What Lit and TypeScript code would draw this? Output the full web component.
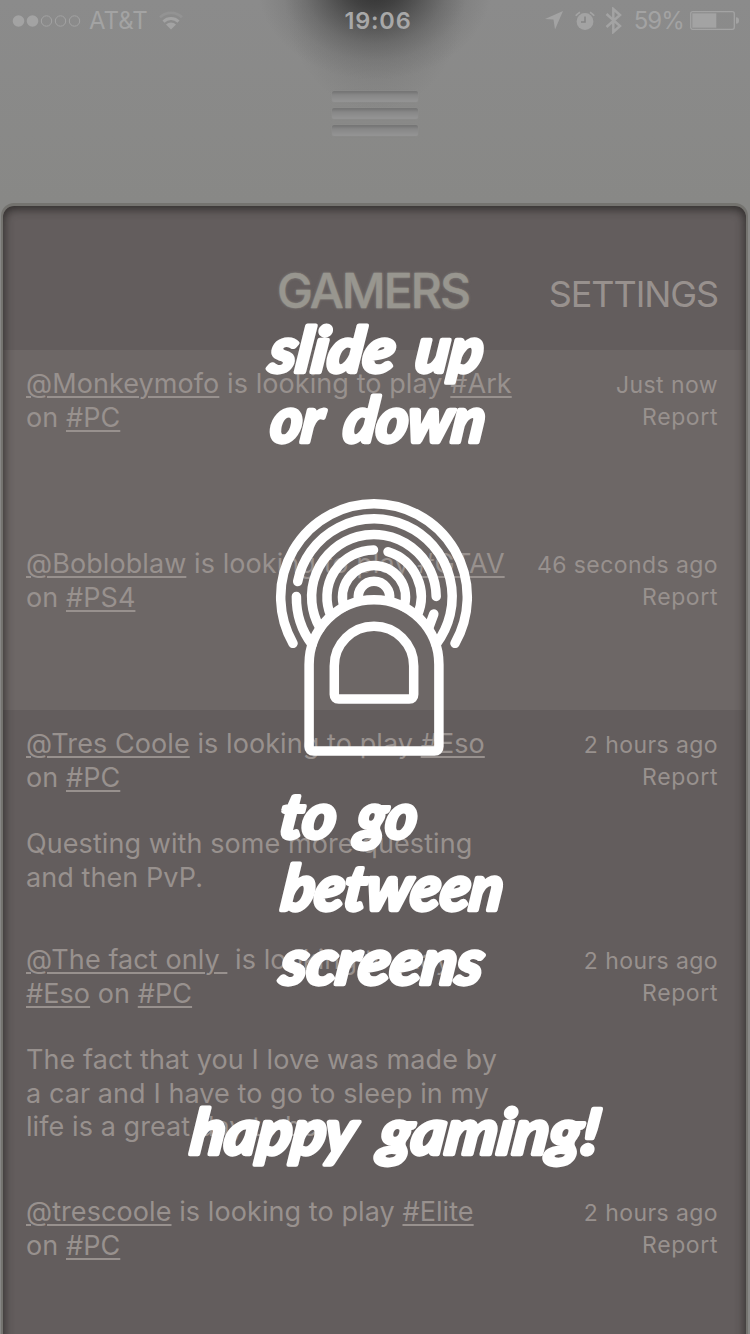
import { LitElement, html, css, svg, nothing } from "lit";
import { customElement, property } from "lit/decorators.js";

interface Post {
  user: string;
  gap: string;
  game: string;
  wrapGame?: boolean;
  platform: string;
  time: string;
  note?: string[];
  size: string;
}

const POSTS: Post[] = [
  { user: "@Monkeymofo", gap: " ", game: "#Ark", platform: "#PC", time: "Just now", size: "short lit" },
  { user: "@Bobloblaw", gap: " ", game: "#GTAV", platform: "#PS4", time: "46 seconds ago", size: "short lit" },
  { user: "@Tres Coole", gap: " ", game: "#Eso", platform: "#PC", time: "2 hours ago", note: ["Questing with some more questing", "and then PvP."], size: "medium" },
  { user: "@The fact only\u00a0", gap: "\u00a0", game: "#Eso", wrapGame: true, platform: "#PC", time: "2 hours ago", note: ["The fact that you I love was made by", "a car and I have to go to sleep in my", "life is a great day to be"], size: "tall" },
  { user: "@trescoole", gap: " ", game: "#Elite", platform: "#PC", time: "2 hours ago", size: "short" },
];

@customElement("status-bar")
class StatusBar extends LitElement {
  static styles = css`
    :host { display: flex; justify-content: space-between; height: 41px; padding: 0 11px 0 12px; color: #a3a3a3; font: 400 24px/41px Inter, sans-serif; position: relative; }
    svg { display: block; fill: none; stroke: none; }
    .left, .right { display: flex; align-items: center; }
    .carrier { margin-left: 8px; letter-spacing: 0; }
    .wifi { margin-left: 10px; }
    .clock { position: absolute; left: 0; right: 2px; text-align: center; font-weight: 600; font-size: 23.5px; letter-spacing: 0.8px; color: #a8a8a8; top: 0; padding-left: 8px; }
    .pct { margin: 0 6px 0 11px; letter-spacing: -0.9px; }
    .bt { margin-left: 10px; }
    .alarm { margin-left: 12px; }
  `;
  render() {
    return html`
      <div class="left">
        <svg width="69" height="14" viewBox="0 0 69 14">
          ${[6.5, 20.5].map((x) => svg`<circle cx=${x} cy="7" r="5.8" fill="#a3a3a3"/>`)}
          ${[34.5, 48.5, 62.5].map((x) => svg`<circle cx=${x} cy="7" r="5.2" stroke="#a3a3a3"/>`)}
        </svg>
        <span class="carrier">AT&amp;T</span>
        <svg class="wifi" width="26" height="20" viewBox="0 0 26 20">
          <path d="M13 18.500 L8 13.500 A7 7 0 0 1 18 13.500Z" fill="#a3a3a3"/>
          <path d="M5.500 10.600 A10.800 10.800 0 0 1 20.500 10.600" stroke="#a3a3a3" stroke-width="3"/>
          <path d="M2 6.200 A16 16 0 0 1 24 6.200" stroke="#939393" stroke-width="2.8"/>
        </svg>
      </div>
      <div class="clock">19:06</div>
      <div class="right">
        <svg width="18" height="19" viewBox="0 0 18 19"><path d="M18 0 L10 18.500 L8.500 8.500 L0 8Z" fill="#a3a3a3"/></svg>
        <svg class="alarm" width="20" height="20" viewBox="0 0 20 20">
          <circle cx="10" cy="10.500" r="8.400" fill="#a3a3a3"/>
          <path d="M10 5.500V11H6" stroke="#858585" stroke-width="1.600"/>
          <path d="M.8 4.800A12 12 0 0 1 5 1.200M15 1.200A12 12 0 0 1 19.200 4.800" stroke="#a3a3a3" stroke-width="1.800"/>
        </svg>
        <svg class="bt" width="18" height="27" viewBox="0 0 18 27"><path d="M1.500 7 L15 19 L8.300 25 V2 L15 8 L1.500 20" stroke="#a3a3a3" stroke-width="2.500"/></svg>
        <span class="pct">59%</span>
        <svg width="49" height="19" viewBox="0 0 49 19">
          <rect x=".7" y=".7" width="43.600" height="17.600" rx="2" stroke="#a3a3a3" stroke-width="1.300"/>
          <rect x="2.300" y="2.300" width="24" height="14.400" fill="#a3a3a3"/>
          <path d="M46 6.200a3 3.300 0 0 1 0 6.600Z" fill="#a3a3a3"/>
        </svg>
      </div>`;
  }
}

@customElement("post-row")
class PostRow extends LitElement {
  @property({ attribute: false }) post!: Post;
  static styles = css`
    :host { display: block; color: #98918e; font-family: Inter, sans-serif; }
    .row { box-sizing: border-box; display: flex; justify-content: space-between; padding: 17px 28px 0 23px; }
    .short { height: 180px; }
    .medium { height: 216px; }
    .tall { height: 252px; }
    .lit { background: rgba(125, 120, 119, 0.38); }
    .main { font-size: 27px; line-height: 33.5px; white-space: pre; letter-spacing: 0.08px; }
    .link { text-decoration: underline; text-decoration-thickness: 2px; text-underline-offset: 3px; }
    .note { margin-top: 33px; }
    .side { text-align: right; font-size: 23px; line-height: 32px; letter-spacing: 0.6px; padding-top: 2px; white-space: nowrap; }
    .time { letter-spacing: 0.42px; }
  `;
  render() {
    const p = this.post;
    const game = html`<span class="link">${p.game}</span>`;
    return html`<div class="row ${p.size}">
      <div class="main"><div><span class="link">${p.user}</span>${p.gap}is looking to play${p.wrapGame ? nothing : html` ${game}`}</div><div>${p.wrapGame ? html`${game} ` : nothing}on <span class="link">${p.platform}</span></div>${p.note ? html`<div class="note">${p.note.map((l) => html`<div>${l}</div>`)}</div>` : nothing}</div>
      <div class="side"><div class="time">${p.time}</div><div>Report</div></div>
    </div>`;
  }
}

/* One word of the hand-lettered copy: text, left edge, width. */
type Word = [string, number, number];

const LINES: { y: number; words: Word[] }[] = [
  { y: 372, words: [["slide", 268, 125], ["up", 414, 67]] },
  { y: 442, words: [["or", 269, 52], ["down", 342, 141]] },
  { y: 838, words: [["to", 278, 56], ["go", 355, 60]] },
  { y: 910, words: [["between", 280, 221]] },
  { y: 984, words: [["screens", 279, 202]] },
  { y: 1154, words: [["happy", 189, 165], ["gaming!", 378, 219]] },
];

@customElement("gesture-guide")
class GestureGuide extends LitElement {
  static styles = css`
    :host { display: block; }
    .guide { display: block; width: 750px; height: 1334px; }
    .hand { font: italic 700 60px Lato, sans-serif; fill: #fff; stroke: #fff; stroke-width: 4.2px; stroke-linejoin: round; stroke-linecap: round; }
    .touch { fill: none; stroke: #fff; stroke-width: 9.5px; stroke-linecap: round; stroke-linejoin: round; }
  `;
  render() {
    return html`<svg class="guide" viewBox="0 0 750 1334">
      ${LINES.map((l) => svg`<text class="hand" transform="translate(0 ${l.y}) skewX(-7) scale(1 1.04)">${l.words.map(([t, x, w]) => svg`<tspan x=${x} textLength=${w} lengthAdjust="spacingAndGlyphs">${t}</tspan>`)}</text>`)}
      <g class="touch">
        <path d="M293 643.300A93.300 93.300 0 1 1 455 643.300"/>
        <path d="M297.700 581.500A78 78 0 1 1 435.900 644.500"/>
        <path d="M296.400 596.500A78 78 0 0 0 312.100 644.500"/>
        <path d="M320.100 628.200A62.300 62.300 0 1 1 436.200 596.500"/>
        <path d="M433.800 614L429 627"/>
        <path d="M330.900 615.800A47 47 0 0 1 373.500 550"/>
        <path d="M388 551.700A47 47 0 0 1 417.100 615.800"/>
        <path d="M344.100 606.800A31.500 31.500 0 1 1 403.900 606.800"/>
        <path d="M358.600 600A15.700 15.700 0 1 1 389.400 600"/>
        <path d="M309.100 664.500A64.900 64.900 0 0 1 438.900 664.500V746.500Q438.900 751 434.400 751H313.600Q309.100 751 309.100 746.500Z"/>
        <path d="M334.300 666A39.700 39.700 0 0 1 413.700 666V694.500Q413.700 699 409.200 699H338.800Q334.300 699 334.300 694.500Z"/>
      </g>
    </svg>`;
  }
}

@customElement("app-root")
class AppRoot extends LitElement {
  static styles = css`
    :host { display: block; position: relative; width: 750px; height: 1334px; overflow: hidden; font-family: Inter, sans-serif; }
    .page { display: flex; flex-direction: column; height: 1334px; background: radial-gradient(ellipse 118px 96px at 375px -16px, rgba(30,30,30,.8) 0, rgba(40,40,40,.68) 25%, rgba(55,55,55,.5) 45%, rgba(75,75,75,.36) 62%, rgba(95,95,95,.2) 80%, rgba(120,120,120,0) 100%), radial-gradient(ellipse 90px 110px at 375px 0, rgba(85,85,85,.45), rgba(120,120,120,0)), linear-gradient(#8b8b8b, #888886 200px); }
    .handle { height: 165px; display: flex; justify-content: center; padding-top: 50px; box-sizing: border-box; }
    .bars { display: grid; gap: 6px; width: 86px; height: 44px; grid-template-rows: repeat(3, 11px); }
    .bar { background: linear-gradient(#767676 1px, #7c7c7c 2px, #878787 4px, #939393 10px); box-sizing: border-box; border-radius: 2px; box-shadow: 0 0 2px rgba(150,150,150,.6); }
    .panel { flex: 1; margin: 0 4px -20px 3px; border-radius: 11px; background: #635d5d; box-shadow: 0 -1px 0 2px #74736f; overflow: hidden; position: relative; }
    .head { height: 144px; display: grid; grid-template-columns: 1fr auto 1fr; align-items: start; padding: 56px 28px 0 23px; box-sizing: border-box; color: #98968f; }
    .title { grid-column: 2; font-size: 48px; line-height: 58px; font-weight: 500; letter-spacing: -1.9px; padding-left: 2px; text-shadow: 0 0 3px rgba(152,150,143,.7); -webkit-text-stroke: .4px #98968f; }
    .settings { justify-self: end; font-size: 36px; line-height: 44px; margin-top: 10px; color: #98918e; letter-spacing: -1.1px; }
    .shade { position: absolute; inset: 0; border-radius: 11px; box-shadow: inset 0 2px 10px 1px rgba(35,32,31,.8); }
    .overlay { position: absolute; inset: 0; }
  `;
  render() {
    return html`
      <div class="page">
        <status-bar></status-bar>
        <div class="handle"><div class="bars"><div class="bar"></div><div class="bar"></div><div class="bar"></div></div></div>
        <div class="panel">
          <div class="head"><div class="title">GAMERS</div><div class="settings">SETTINGS</div></div>
          ${POSTS.map((p) => html`<post-row .post=${p}></post-row>`)}
          <div class="shade"></div>
        </div>
      </div>
      <gesture-guide class="overlay"></gesture-guide>`;
  }
}
